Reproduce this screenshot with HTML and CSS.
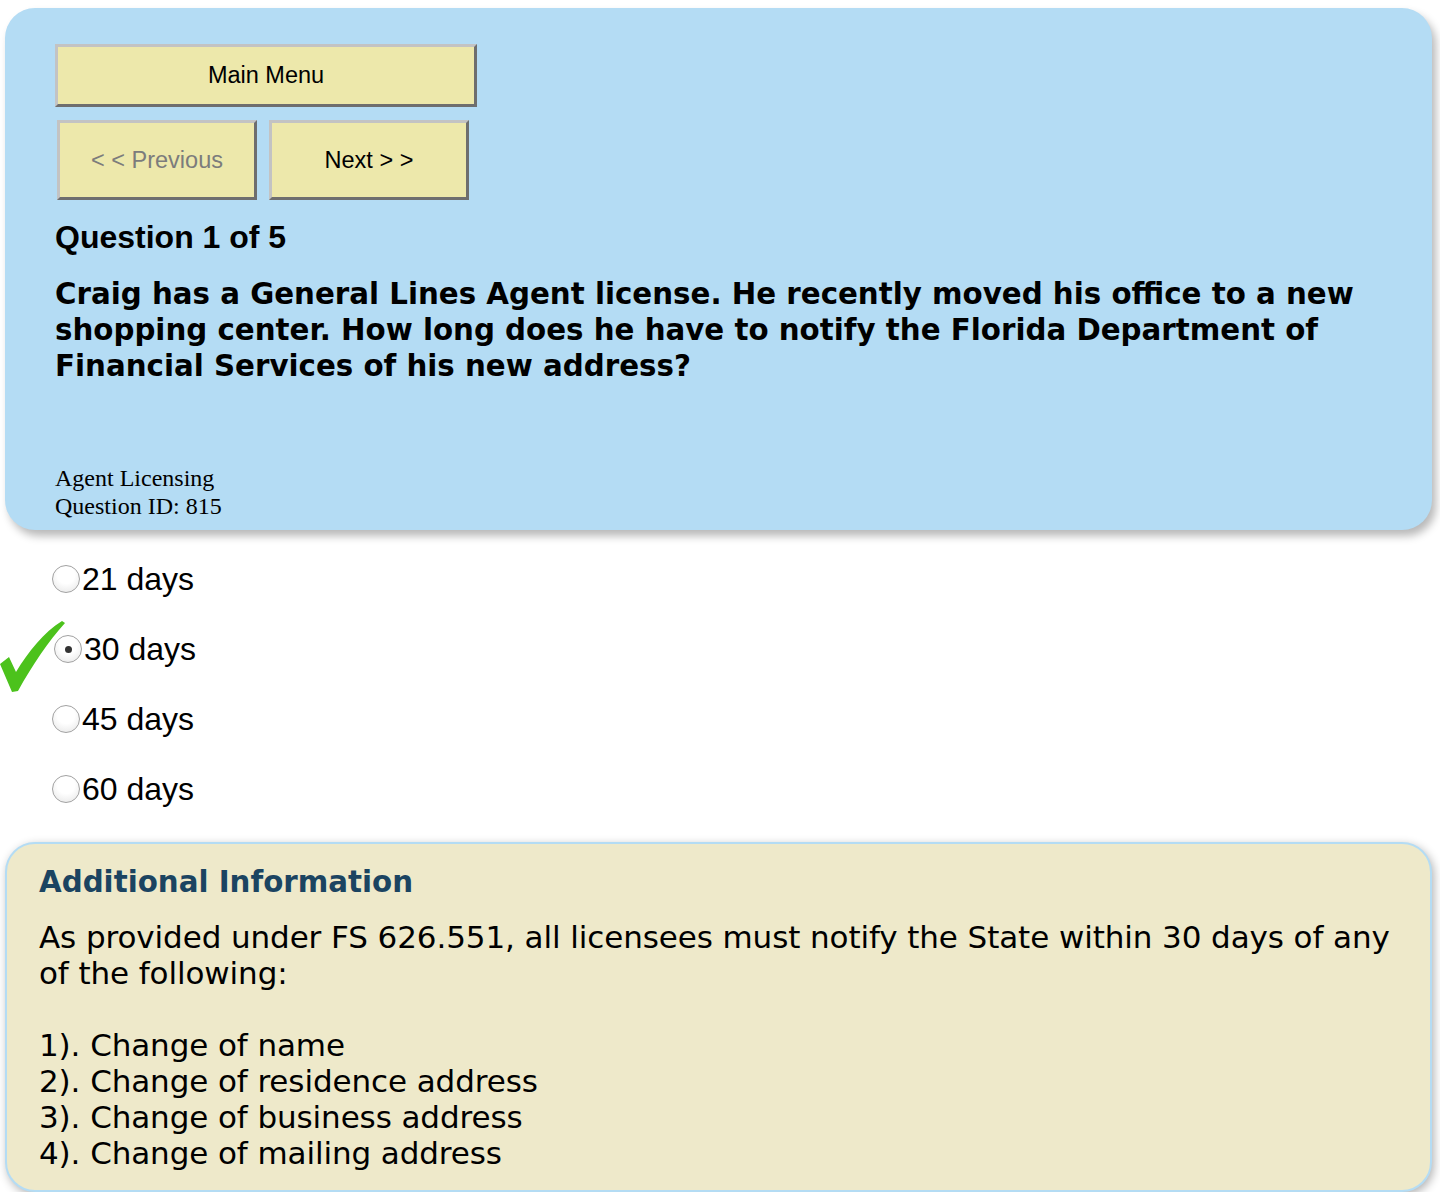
FILE: index.html
```html
<!DOCTYPE html>
<html>
<head>
<meta charset="utf-8">
<title>Question 1 of 5</title>
<link rel="stylesheet" href="styles.css">
</head>
<body>
<div class="question-panel">
  <div class="nav">
    <button class="btn btn-main">Main Menu</button>
    <div class="nav-row">
      <button class="btn btn-nav btn-disabled">&lt; &lt; Previous</button>
      <button class="btn btn-nav">Next &gt; &gt;</button>
    </div>
  </div>
  <h2 class="q-count">Question 1 of 5</h2>
  <p class="q-text">Craig has a General Lines Agent license. He recently moved his office to a new shopping center. How long does he have to notify the Florida Department of Financial Services of his new address?</p>
  <div class="q-meta">Agent Licensing<br>Question ID: 815</div>
</div>

<ul class="answers">
  <li class="answer"><span class="radio"></span>21 days</li>
  <li class="answer answer-correct">
    <svg class="check" viewBox="0 0 66 72" width="66" height="72" aria-hidden="true">
      <path d="M0 44 L9 37 L16 52 C28 32 44 12 62 1 L65 3 C48 22 33 44 18 71 L12 72 Z" fill="#4cc21c"/>
    </svg>
    <span class="radio radio-on"></span>30 days</li>
  <li class="answer"><span class="radio"></span>45 days</li>
  <li class="answer"><span class="radio"></span>60 days</li>
</ul>

<div class="info-box">
  <h3 class="info-title">Additional Information</h3>
  <p class="info-text">As provided under FS 626.551, all licensees must notify the State within 30 days of any of the following:</p>
  <p class="info-text info-list">1). Change of name<br>2). Change of residence address<br>3). Change of business address<br>4). Change of mailing address</p>
</div>
</body>
</html>
```

FILE: styles.css
```css
html, body {
  margin: 0;
  padding: 0;
  background: #ffffff;
}

body {
  padding: 8px 8px 0 5px;
  font-family: "Liberation Sans", Arial, sans-serif;
  color: #000;
}

.question-panel {
  background: #b4dcf4;
  border-radius: 30px;
  box-shadow: 4px 6px 8px rgba(0, 0, 0, 0.28);
  padding: 36px 50px 10px 50px;
  box-sizing: border-box;
  height: 522px;
  display: flex;
  flex-direction: column;
}

.nav {
  display: flex;
  flex-direction: column;
  gap: 13px;
}

.nav-row {
  display: flex;
  gap: 12px;
  padding-left: 2px;
}

.btn {
  font-family: "Liberation Sans", Arial, sans-serif;
  font-size: 23.5px;
  color: #000;
  background: #ede8ab;
  border-style: solid;
  border-width: 3px;
  border-color: #c3c3c3 #6e6e6e #6e6e6e #c3c3c3;
  padding: 0;
  margin: 0;
}

.btn-main {
  width: 422px;
  height: 63px;
}

.btn-nav {
  width: 200px;
  height: 80px;
}

.btn-disabled {
  color: #7c7c7c;
}

.q-count {
  font-family: "Liberation Sans", Arial, sans-serif;
  font-weight: bold;
  font-size: 32px;
  line-height: 40px;
  margin: 17px 0 0 0;
}

.q-text {
  font-family: "DejaVu Sans", sans-serif;
  font-weight: bold;
  font-size: 29.3px;
  line-height: 36px;
  margin: 19px 0 0 0;
}

.q-meta {
  margin-top: auto;
  font-family: "Liberation Serif", "Times New Roman", serif;
  font-size: 24px;
  line-height: 28px;
}

.answers {
  list-style: none;
  margin: 14px 0 0 0;
  padding: 0 0 0 47px;
}

.answer {
  position: relative;
  display: flex;
  align-items: center;
  height: 70px;
  font-size: 32px;
  font-family: "Liberation Sans", Arial, sans-serif;
}

.answer-correct {
  padding-left: 2px;
}

.check {
  position: absolute;
  left: -52px;
  top: 6px;
}

.radio {
  display: inline-block;
  width: 28px;
  height: 28px;
  border-radius: 50%;
  border: 1px solid #a2a2a2;
  background: radial-gradient(circle at 50% 35%, #ffffff 40%, #e4e4e4 100%);
  box-sizing: border-box;
  margin-right: 2px;
  position: relative;
}

.radio-on::after {
  content: "";
  position: absolute;
  left: 10px;
  top: 10px;
  width: 7px;
  height: 7px;
  border-radius: 50%;
  background: #333;
}

.info-box {
  margin-top: 18px;
  background: #eee9ca;
  border: 2px solid #b4dcf4;
  border-radius: 30px;
  box-shadow: 2px 3px 10px rgba(0, 0, 0, 0.3);
  padding: 18px 18px 18px 32px;
  height: 350px;
  box-sizing: border-box;
}

.info-title {
  font-family: "DejaVu Sans", sans-serif;
  font-weight: bold;
  font-size: 29.3px;
  line-height: 40px;
  color: #1b4461;
  margin: 0;
}

.info-text {
  font-family: "DejaVu Sans", sans-serif;
  font-size: 31px;
  letter-spacing: -0.1px;
  line-height: 36px;
  margin: 17px 0 0 0;
}

.info-list {
  margin-top: 36px;
}
```
